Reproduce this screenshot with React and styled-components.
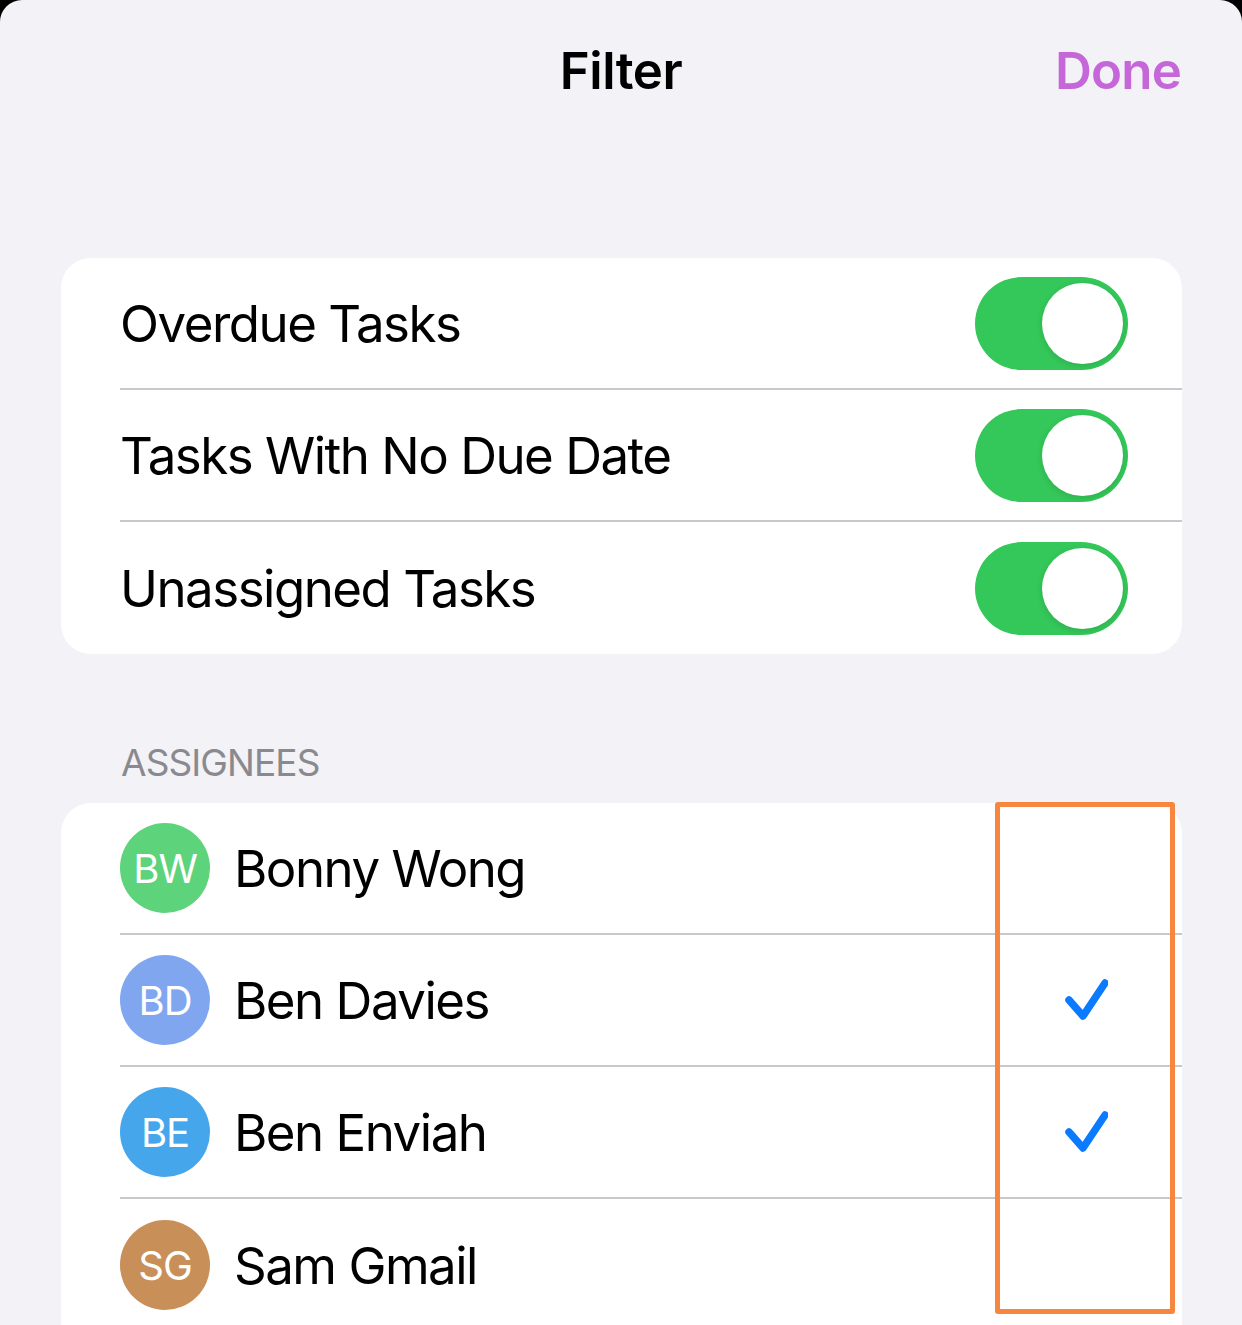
import React from 'react';
import styled, { createGlobalStyle } from 'styled-components';

const GlobalStyle = createGlobalStyle`
  html, body {
    margin: 0;
    padding: 0;
    background: #000;
  }
  body {
    font-family: Inter, "Noto Sans", "Liberation Sans", sans-serif;
    -webkit-font-smoothing: antialiased;
  }
`;

const Sheet = styled.div`
  position: relative;
  width: 1242px;
  height: 1325px;
  overflow: hidden;
  background: #f2f2f7;
  border-radius: 22px 22px 0 0;
`;

const NavBar = styled.div`
  display: grid;
  grid-template-columns: 1fr auto 1fr;
  align-items: center;
  height: 140px;
  padding: 0 61px;
`;

const Title = styled.h1`
  grid-column: 2;
  margin: 0;
  font-size: 51px;
  font-weight: 600;
  letter-spacing: -0.5px;
  color: #000;
`;

const DoneButton = styled.button`
  grid-column: 3;
  justify-self: end;
  border: 0;
  padding: 0;
  background: none;
  font-family: inherit;
  font-size: 51px;
  font-weight: 600;
  letter-spacing: -0.8px;
  color: #c667d9;
`;

const Card = styled.div`
  margin: ${p => p.$top}px 60px 0 61px;
  background: #fff;
  border-radius: ${p => (p.$open ? '30px 30px 0 0' : '30px')};
  overflow: hidden;
`;

const Row = styled.div`
  display: flex;
  align-items: center;
  height: 132px;
  margin-left: 59px;
  padding-right: ${p => p.$right}px;
  box-sizing: border-box;
  border-bottom: ${p => (p.$last ? 'none' : '2px solid #c9c9cd')};
`;

const Label = styled.span`
  flex: 1;
  font-size: 51px;
  letter-spacing: -1.5px;
  color: #000;
`;

const Switch = styled.div`
  position: relative;
  width: 153px;
  height: 93px;
  border-radius: 47px;
  background: #34c759;
  flex-shrink: 0;
`;

const Thumb = styled.div`
  position: absolute;
  top: 6px;
  right: 5px;
  width: 81px;
  height: 81px;
  border-radius: 50%;
  background: #fff;
  box-shadow: 0 2px 6px rgba(0, 0, 0, 0.12);
`;

const SectionHeader = styled.div`
  padding: 86px 0 17px 121px;
  font-size: 37px;
  line-height: 46px;
  letter-spacing: -0.9px;
  color: #8a8a8e;
`;

const Avatar = styled.div`
  display: flex;
  align-items: center;
  justify-content: center;
  width: 90px;
  height: 90px;
  border-radius: 50%;
  margin-right: 24px;
  flex-shrink: 0;
  background: ${p => p.$color};
  color: #fff;
  font-size: 40px;
  letter-spacing: -1px;
`;

const Check = styled.svg`
  width: 44px;
  height: 44px;
  flex-shrink: 0;
`;

const CheckSlot = styled.div`
  width: 44px;
  height: 44px;
  flex-shrink: 0;
`;

const Highlight = styled.div`
  position: absolute;
  left: 995px;
  top: 802px;
  width: 180px;
  height: 512px;
  box-sizing: border-box;
  border: 5px solid #f7873f;
  border-radius: 3px;
  pointer-events: none;
`;

const toggles = ['Overdue Tasks', 'Tasks With No Due Date', 'Unassigned Tasks'];

const people = [
  { initials: 'BW', name: 'Bonny Wong', color: '#5dd37b', checked: false },
  { initials: 'BD', name: 'Ben Davies', color: '#7fa6ef', checked: true },
  { initials: 'BE', name: 'Ben Enviah', color: '#45a6ec', checked: true },
  { initials: 'SG', name: 'Sam Gmail', color: '#c88f58', checked: false },
];

function CheckMark() {
  return (
    <Check viewBox="0 0 44 44">
      <path
        d="M5 22 L19 38 L41 5"
        fill="none"
        stroke="#0a7aff"
        strokeWidth="7.5"
        strokeLinecap="round"
        strokeLinejoin="round"
      />
    </Check>
  );
}

export default function App() {
  return (
    <>
      <GlobalStyle />
      <Sheet>
        <NavBar>
          <Title>Filter</Title>
          <DoneButton>Done</DoneButton>
        </NavBar>

        <Card $top={118}>
          {toggles.map((t, i) => (
            <Row key={t} $right={54} $last={i === toggles.length - 1}>
              <Label>{t}</Label>
              <Switch>
                <Thumb />
              </Switch>
            </Row>
          ))}
        </Card>

        <SectionHeader>ASSIGNEES</SectionHeader>

        <Card $top={0} $open>
          {people.map((p, i) => (
            <Row key={p.name} $right={74} $last={i === people.length - 1}>
              <Avatar $color={p.color}>{p.initials}</Avatar>
              <Label>{p.name}</Label>
              {p.checked ? <CheckMark /> : <CheckSlot />}
            </Row>
          ))}
        </Card>

        <Highlight />
      </Sheet>
    </>
  );
}
